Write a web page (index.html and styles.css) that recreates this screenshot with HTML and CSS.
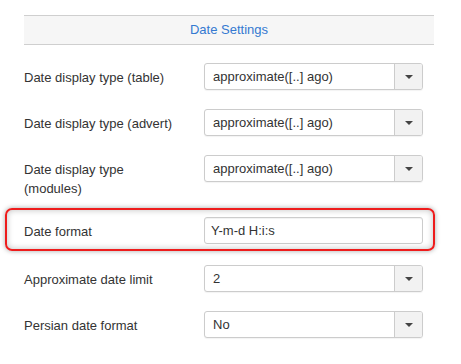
FILE: index.html
```html
<!DOCTYPE html>
<html lang="en">
<head>
  <meta charset="UTF-8">
  <title>Date Settings</title>
  <link rel="stylesheet" href="styles.css">
</head>
<body>
  <div class="settings">
    <div class="section-title">Date Settings</div>

    <div class="form-row">
      <label class="form-label">Date display type (table)</label>
      <div class="select-box">
        <span class="select-value">approximate([..] ago)</span>
        <span class="select-btn"><span class="caret"></span></span>
      </div>
    </div>

    <div class="form-row">
      <label class="form-label">Date display type (advert)</label>
      <div class="select-box">
        <span class="select-value">approximate([..] ago)</span>
        <span class="select-btn"><span class="caret"></span></span>
      </div>
    </div>

    <div class="form-row">
      <label class="form-label">Date display type<br>(modules)</label>
      <div class="select-box">
        <span class="select-value">approximate([..] ago)</span>
        <span class="select-btn"><span class="caret"></span></span>
      </div>
    </div>

    <div class="form-row highlight">
      <label class="form-label">Date format</label>
      <input class="text-input" type="text" value="Y-m-d H:i:s">
    </div>

    <div class="form-row">
      <label class="form-label">Approximate date limit</label>
      <div class="select-box">
        <span class="select-value">2</span>
        <span class="select-btn"><span class="caret"></span></span>
      </div>
    </div>

    <div class="form-row">
      <label class="form-label">Persian date format</label>
      <div class="select-box">
        <span class="select-value">No</span>
        <span class="select-btn"><span class="caret"></span></span>
      </div>
    </div>
  </div>
</body>
</html>
```

FILE: styles.css
```css
* {
  box-sizing: border-box;
}

body {
  margin: 0;
  background: #fff;
  color: #333;
  font-family: 'Liberation Sans', Arial, sans-serif;
  font-size: 13px;
}

.settings {
  padding: 15px 27px 0 24px;
}

.section-title {
  height: 30px;
  line-height: 28px;
  text-align: center;
  color: #3479d1;
  background: #f6f6f6;
  border-top: 1px solid #cfcfcf;
  border-bottom: 1px solid #cfcfcf;
  margin-bottom: 18px;
}

.form-row {
  display: flex;
  align-items: flex-start;
  margin-bottom: 19px;
}

.form-label {
  width: 180px;
  flex-shrink: 0;
  padding-top: 5px;
  line-height: 19px;
}

.select-box,
.text-input {
  width: 219px;
  height: 27px;
  border: 1px solid #ccc;
  border-radius: 3px;
  background: #fff;
}

.select-box {
  display: flex;
  box-shadow: 0 1px 1px rgba(0, 0, 0, 0.05);
}

.select-value {
  flex: 1;
  padding-left: 8px;
  line-height: 25px;
}

.select-btn {
  width: 28px;
  border-left: 1px solid #ccc;
  background: #f2f2f2;
  border-radius: 0 2px 2px 0;
  display: flex;
  justify-content: center;
  align-items: center;
}

.caret {
  width: 0;
  height: 0;
  border-left: 4px solid transparent;
  border-right: 4px solid transparent;
  border-top: 4px solid #444;
}

.text-input {
  font: inherit;
  color: #333;
  padding: 0 6px;
  box-shadow: inset 0 1px 1px rgba(0, 0, 0, 0.06);
  outline: none;
}

.highlight {
  position: relative;
  margin-bottom: 21px;
}

.highlight::before {
  content: "";
  position: absolute;
  top: -9px;
  bottom: -7px;
  left: -19px;
  right: -1px;
  border: 2px solid #ee1c1c;
  border-radius: 7px;
  box-shadow: 0 0 5px rgba(0, 0, 0, 0.35), inset 0 0 6px rgba(0, 0, 0, 0.25);
  pointer-events: none;
}
```
